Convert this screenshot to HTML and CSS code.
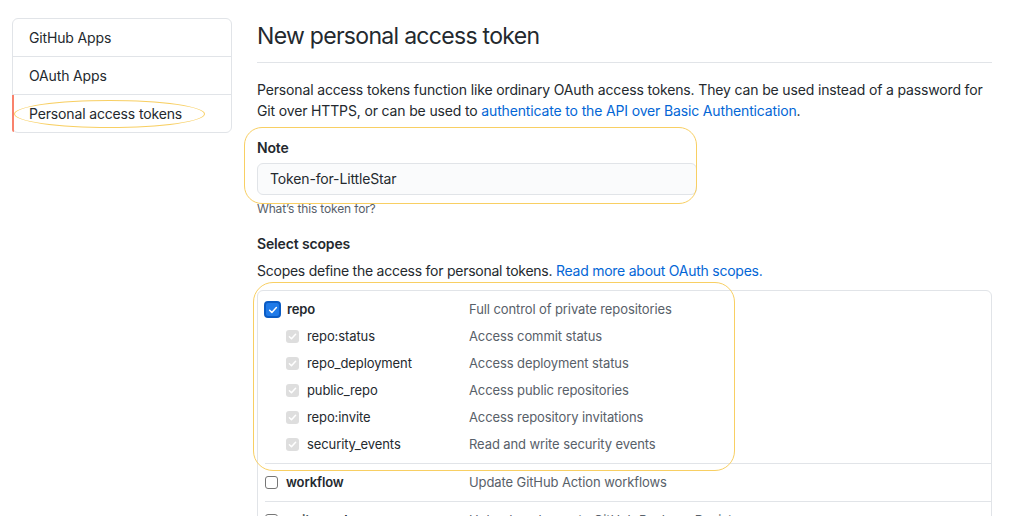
FILE: index.html
```html
<!DOCTYPE html>
<html lang="en">
<head>
<meta charset="utf-8">
<title>New personal access token</title>
<link rel="stylesheet" href="styles.css">
</head>
<body>
<div class="layout">
  <nav class="menu">
    <a class="menu-item">GitHub Apps</a>
    <a class="menu-item">OAuth Apps</a>
    <a class="menu-item selected">Personal access tokens<span class="mark mark-menu"></span></a>
  </nav>
  <main class="main">
    <h1 class="subhead">New personal access token</h1>
    <p class="intro">Personal access tokens function like ordinary OAuth access tokens. They can be used instead of a password for Git over HTTPS, or can be used to <a class="link">authenticate to the API over Basic Authentication</a>.</p>
    <div class="form-group">
      <span class="mark mark-note"></span>
      <label class="label">Note</label>
      <div class="input">Token-for-LittleStar</div>
      <p class="note">What’s this token for?</p>
    </div>
    <h3 class="label scopes-title">Select scopes</h3>
    <p class="scopes-desc">Scopes define the access for personal tokens. <a class="link">Read more about OAuth scopes.</a></p>
    <div class="scopes">
      <span class="mark mark-repo"></span>
      <div class="group">
        <div class="row">
          <span class="name"><span class="cb cb-on"><svg viewBox="0 0 16 16" width="12" height="12"><path d="M3.5 8.3l3 3 6-6.6" fill="none" stroke="#fff" stroke-width="2" stroke-linecap="round" stroke-linejoin="round"/></svg></span><b>repo</b></span>
          <span class="desc">Full control of private repositories</span>
        </div>
        <div class="row sub"><span class="name"><span class="cb cb-dis"><svg viewBox="0 0 16 16" width="11" height="11"><path d="M3.5 8.3l3 3 6-6.6" fill="none" stroke="#fff" stroke-width="2.2" stroke-linecap="round" stroke-linejoin="round"/></svg></span>repo:status</span><span class="desc">Access commit status</span></div>
        <div class="row sub"><span class="name"><span class="cb cb-dis"><svg viewBox="0 0 16 16" width="11" height="11"><path d="M3.5 8.3l3 3 6-6.6" fill="none" stroke="#fff" stroke-width="2.2" stroke-linecap="round" stroke-linejoin="round"/></svg></span>repo_deployment</span><span class="desc">Access deployment status</span></div>
        <div class="row sub"><span class="name"><span class="cb cb-dis"><svg viewBox="0 0 16 16" width="11" height="11"><path d="M3.5 8.3l3 3 6-6.6" fill="none" stroke="#fff" stroke-width="2.2" stroke-linecap="round" stroke-linejoin="round"/></svg></span>public_repo</span><span class="desc">Access public repositories</span></div>
        <div class="row sub"><span class="name"><span class="cb cb-dis"><svg viewBox="0 0 16 16" width="11" height="11"><path d="M3.5 8.3l3 3 6-6.6" fill="none" stroke="#fff" stroke-width="2.2" stroke-linecap="round" stroke-linejoin="round"/></svg></span>repo:invite</span><span class="desc">Access repository invitations</span></div>
        <div class="row sub"><span class="name"><span class="cb cb-dis"><svg viewBox="0 0 16 16" width="11" height="11"><path d="M3.5 8.3l3 3 6-6.6" fill="none" stroke="#fff" stroke-width="2.2" stroke-linecap="round" stroke-linejoin="round"/></svg></span>security_events</span><span class="desc">Read and write security events</span></div>
      </div>
      <div class="group">
        <div class="row"><span class="name"><span class="cb cb-off"></span><b>workflow</b></span><span class="desc">Update GitHub Action workflows</span></div>
      </div>
      <div class="group">
        <div class="row"><span class="name"><span class="cb cb-off"></span><b>write:packages</b></span><span class="desc">Upload packages to GitHub Package Registry</span></div>
      </div>
    </div>
  </main>
</div>
</body>
</html>
```
FILE: styles.css
```css
* { box-sizing: border-box; }
html, body { margin: 0; padding: 0; background: #fff; }
body {
  font-family: Inter, "Liberation Sans", Arial, sans-serif;
  font-size: 14px;
  line-height: 1.5;
  letter-spacing: -0.15px;
  color: #24292e;
  overflow: hidden;
  height: 516px;
}
.layout {
  display: flex;
  gap: 25px;
  padding: 18px 0 0 12px;
  align-items: flex-start;
}
.menu {
  width: 220px;
  flex: none;
  border: 1px solid #e1e4e8;
  border-radius: 6px;
  display: flex;
  flex-direction: column;
}
.menu-item {
  position: relative;
  display: block;
  padding: 8px 16px;
  line-height: 21px;
  color: #24292e;
  border-top: 1px solid #e1e4e8;
}
.menu-item:first-child { border-top: 0; }
.menu-item.selected::before {
  content: "";
  position: absolute;
  left: -1px;
  top: 0;
  bottom: 0;
  width: 2px;
  background: #f9826c;
  border-bottom-left-radius: 6px;
}
.main { width: 735px; flex: none; }
.subhead {
  margin: 0 0 16px;
  padding-bottom: 8px;
  font-size: 23px;
  letter-spacing: -0.7px;
  font-weight: 400;
  line-height: 36px;
  border-bottom: 1px solid #e1e4e8;
}
.intro { margin: 0 0 16px; line-height: 21px; }
.link { color: #0366d6; text-decoration: none; }
.form-group { position: relative; }
.label { display: block; font-weight: 600; line-height: 21px; margin: 0 0 5px; font-size: 14px; }
.input {
  width: 440px;
  height: 32px;
  padding: 0 12px;
  line-height: 30px;
  background: #fafbfc;
  border: 1px solid #e1e4e8;
  border-radius: 6px;
  color: #24292e;
}
.note { margin: 5px 0 0; font-size: 12px; line-height: 18px; color: #586069; }
.scopes-title { margin: 15px 0 0; }
.scopes-desc { margin: 6px 0 9px; line-height: 21px; letter-spacing: -0.25px; }
.scopes {
  position: relative;
  border: 1px solid #e1e4e8;
  border-radius: 6px;
  padding-left: 7px;
  font-size: 13px;
  letter-spacing: -0.1px;
}
.group { padding: 5px 0; border-top: 1px solid #e1e4e8; }
.group:first-of-type { border-top: 0; }
.row {
  display: grid;
  grid-template-columns: 204px 1fr;
  line-height: 27px;
  height: 27px;
}
.name { display: flex; align-items: center; gap: 8px; }
.name b { font-weight: 600; }
.sub .name { padding-left: 21px; }
.desc { color: #586069; }
.cb {
  flex: none;
  display: inline-flex;
  align-items: center;
  justify-content: center;
  width: 13px;
  height: 13px;
  border-radius: 3px;
}
.cb-on {
  width: 17px;
  height: 17px;
  margin-left: -1px;
  margin-right: -2px;
  background: #1f7ae8;
  border: 2px solid #0a5bc4;
  border-radius: 4px;
}
.cb-dis { background: #dedede; }
.cb-off { background: #fff; border: 1px solid #767676; }
.mark {
  position: absolute;
  border: 1px solid #f8cf63;
  pointer-events: none;
}
.mark-menu {
  left: 1px;
  top: 5px;
  width: 191px;
  height: 28px;
  border-radius: 50%;
}
.mark-note {
  left: -13px;
  top: -10px;
  width: 453px;
  height: 77px;
  border-radius: 18px;
}
.mark-repo {
  left: -5px;
  top: -9px;
  width: 482px;
  height: 189px;
  border-radius: 20px;
}
```
